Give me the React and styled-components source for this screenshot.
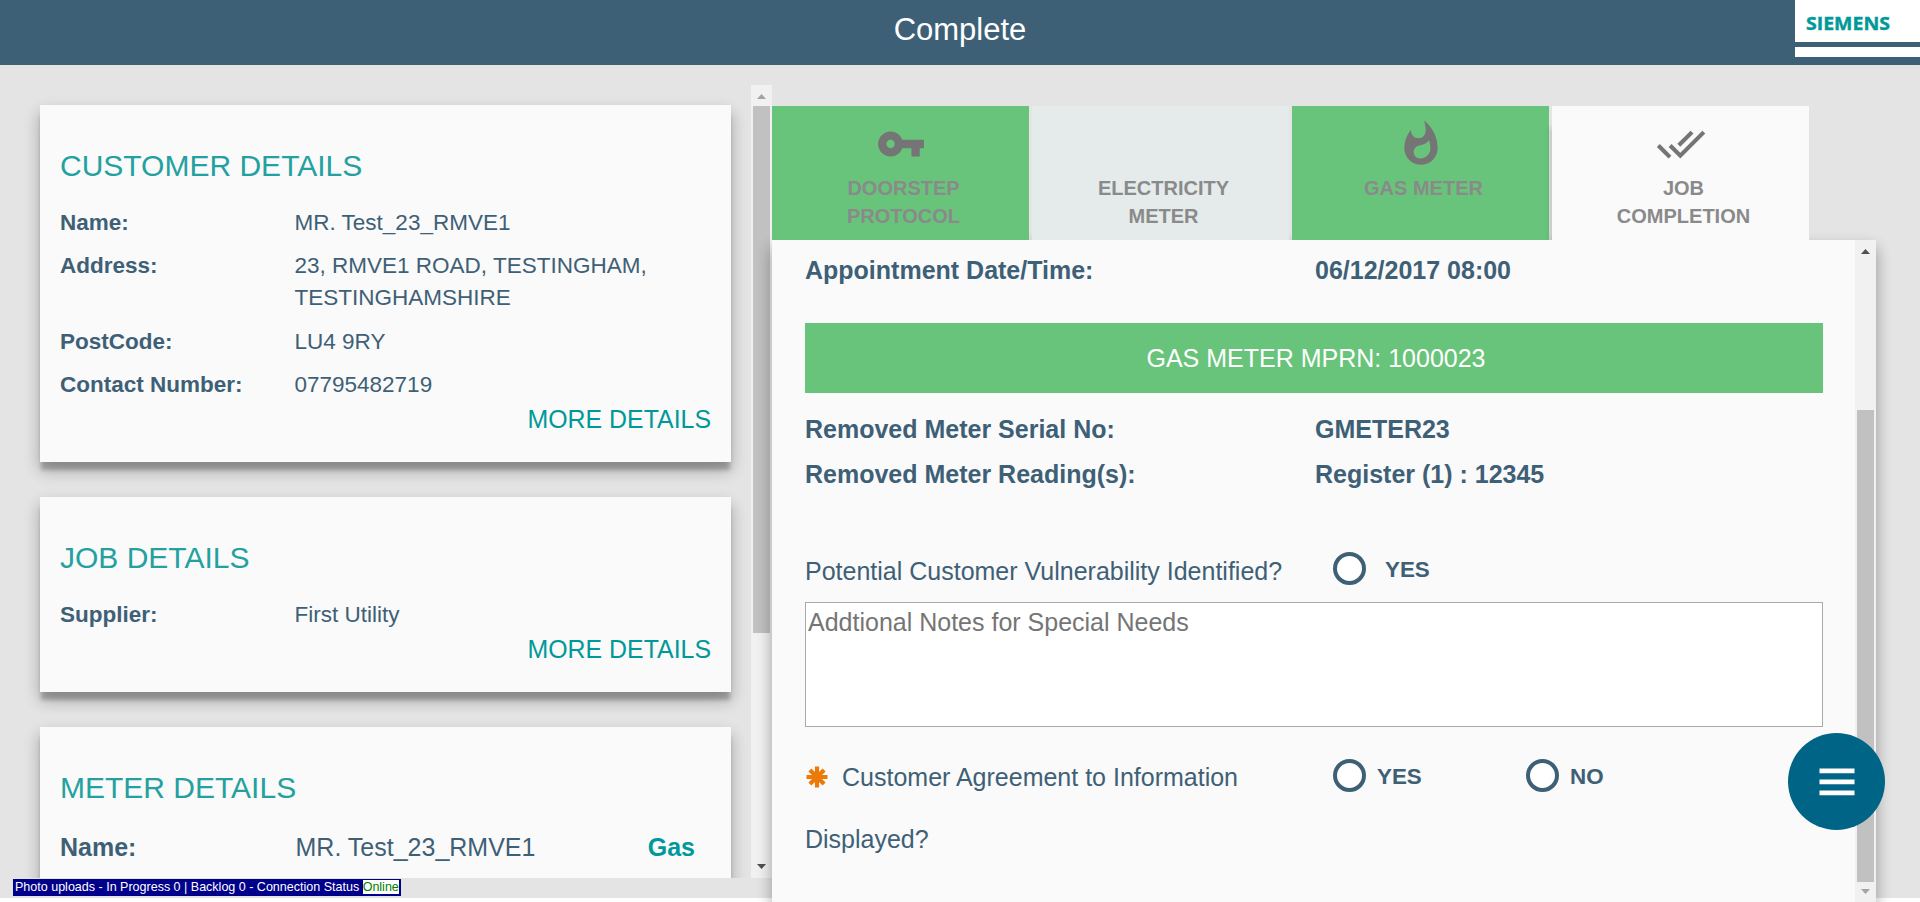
import React from "react";
import styled, { createGlobalStyle } from "styled-components";
import { MdVpnKey, MdWhatshot, MdDoneAll } from "react-icons/md";

const GlobalStyle = createGlobalStyle`
  *, *::before, *::after { box-sizing: border-box; }
  body {
    margin: 0;
    background: #fff;
    color: #3e6077;
    font-family: "Liberation Sans", Arial, sans-serif;
  }
`;

const Page = styled.div`
  display: flex;
  flex-direction: column;
  height: 902px;
  overflow: hidden;
  background: linear-gradient(#e4e4e4 898px, #fff 898px);
`;

const Header = styled.header`
  flex: none;
  display: grid;
  grid-template-columns: 1fr auto 1fr;
  height: 65px;
  background: #3e6077;
`;

const Title = styled.h1`
  grid-column: 2;
  margin: 0;
  color: #fff;
  font-size: 31px;
  font-weight: 400;
  line-height: 59px;
`;

const Brand = styled.div`
  justify-self: end;
  display: flex;
  flex-direction: column;
  gap: 5px;
  width: 125px;
  height: 57px;
`;

const BrandName = styled.div`
  height: 42px;
  background: #fff;

  svg { display: block; }
  text {
    fill: #009999;
    stroke: #009999;
    stroke-width: 0.4px;
    font-family: "Open Sans", "Noto Sans", sans-serif;
    font-size: 18.5px;
    font-weight: 700;
  }
`;

const BrandStripe = styled.div`
  flex: 1;
  background: #fff;
`;

const Content = styled.div`
  flex: 1;
  display: flex;
  min-height: 0;
`;

const Sidebar = styled.div`
  width: 772px;
  padding-top: 20px;
`;

const SideScroller = styled.div`
  display: flex;
  height: 793px;
`;

const Cards = styled.div`
  flex: 1;
  display: flex;
  flex-direction: column;
  gap: 35px;
  padding: 20px 20px 0 40px;
  overflow: hidden;
`;

const Card = styled.section`
  flex: none;
  height: ${(p) => p.$height}px;
  padding: 44px 20px 0 20px;
  background: #fafafa;
  box-shadow:
    0 9px 4px -1px rgba(0, 0, 0, 0.22),
    0 8px 14px 0 rgba(0, 0, 0, 0.17),
    0 8px 18px 0 rgba(0, 0, 0, 0.12);
`;

const CardTitle = styled.h2`
  margin: 0 0 24px;
  color: #23a1a1;
  font-size: 30px;
  font-weight: 400;
  line-height: 34px;
`;

const DetailRow = styled.div`
  display: grid;
  grid-template-columns: ${(p) => (p.$large ? 235.5 : 234.5)}px 1fr auto;
  margin-bottom: ${(p) => (p.$last ? 0 : 11.3)}px;
  font-size: ${(p) => (p.$large ? 25 : 22.5)}px;
  line-height: ${(p) => (p.$large ? 36 : 32)}px;
`;

const Label = styled.span`
  font-weight: 700;
`;

const Fuel = styled.span`
  padding-right: 16px;
  color: #009999;
  font-weight: 700;
`;

const MoreLink = styled.a`
  display: block;
  color: #009999;
  font-size: 24.9px;
  line-height: 36px;
  text-align: right;
`;

const Status = styled.div`
  width: fit-content;
  height: 17px;
  margin: 1px 0 0 13px;
  padding: 1px 2px;
  background: #00008b;
  color: #fff;
  font-size: 12.53px;
  line-height: 14px;
  white-space: pre;

  b {
    display: inline-block;
    height: 14px;
    background: #fff;
    color: #008000;
    font-weight: 400;
  }
`;

const Track = styled.div`
  flex: none;
  display: flex;
  flex-direction: column;
  align-items: center;
  width: 21px;
  background: #f1f1f1;
`;

const ArrowBox = styled.div`
  display: grid;
  place-items: center;
  height: 21px;
  padding: ${(p) => (p.$down ? "0 1px 3px 0" : "2px 1px 0 0")};
`;

const Thumb = styled.div`
  width: 17px;
  height: ${(p) => p.$height}px;
  margin: ${(p) => p.$offset || 0}px 0 auto;
  background: #c1c1c1;
`;

const Main = styled.main`
  display: flex;
  flex-direction: column;
  width: 1104px;
  padding-top: 41px;
`;

const Tabs = styled.nav`
  flex: none;
  display: flex;
  gap: 3px;
  height: 134px;
`;

const tones = { done: "#68c47a", idle: "#e4ebea", current: "#fafafa" };

const Tab = styled.div`
  display: flex;
  flex-direction: column;
  align-items: center;
  width: 257px;
  padding-top: 13px;
  background: ${(p) => tones[p.$tone]};
  box-shadow: ${(p) => (p.$tone === "current" ? "-1px 22px 6px rgba(0, 0, 0, 0.2)" : "none")};
  clip-path: inset(0 0 0 -10px);
`;

const TabIcon = styled.div`
  height: 54.5px;
  color: #757575;

  svg { display: block; width: 50px; height: 50px; }
`;

const TabLabel = styled.span`
  width: 150px;
  padding-left: 6px;
  box-sizing: content-box;
  color: #8a8a8a;
  font-size: 20px;
  font-weight: 700;
  line-height: 28px;
  text-align: center;
`;

const Panel = styled.div`
  flex: 1;
  display: flex;
  background: #fafafa;
  box-shadow: 0 8px 14px 0 rgba(0, 0, 0, 0.2), 0 8px 16px 0 rgba(0, 0, 0, 0.16);
`;

const Form = styled.div`
  flex: 1;
  padding: 13px 32px 0 33px;
  font-size: 25px;
`;

const Fact = styled.div`
  display: grid;
  grid-template-columns: 510px 1fr;
  height: 45px;
  font-weight: 700;
  line-height: 34px;
`;

const MeterBanner = styled.div`
  height: 70px;
  margin: 25px 0 19px;
  padding-left: 4px;
  background: #68c47a;
  color: #fff;
  line-height: 70px;
  text-align: center;
`;

const Question = styled.div`
  display: flex;
  height: ${(p) => p.$height}px;
`;

const Prompt = styled.div`
  width: 528px;
  padding: ${(p) => p.$top}px 60px 0 0;
  line-height: 62px;
  white-space: ${(p) => (p.$wrap ? "normal" : "nowrap")};

  svg { width: 24px; height: 24px; margin-right: 13px; vertical-align: -3px; }
`;

const Option = styled.label`
  display: flex;
  gap: ${(p) => p.$gap}px;
  width: 193px;
  height: 33px;
  margin-top: ${(p) => p.$top}px;
  font-size: 22.4px;
  font-weight: 700;
  line-height: 35px;
`;

const Radio = styled.span`
  width: 33px;
  height: 33px;
  border: 4px solid #3e6077;
  border-radius: 50%;
  background: #fff;
`;

const Notes = styled.textarea`
  display: block;
  width: 100%;
  height: 125px;
  margin: 0;
  padding: 4px 2px;
  border: 1px solid #a9a9a9;
  background: #fff;
  font: 25px/30px "Liberation Sans", Arial, sans-serif;
  resize: none;

  &::placeholder { color: #757575; }
`;

const MenuButton = styled.button`
  position: absolute;
  left: 1788px;
  top: 733px;
  width: 97px;
  height: 97px;
  padding: 0;
  border: 0;
  border-radius: 50%;
  background: #006487;

  svg { display: block; margin: 0 auto; }
`;

const Arrow = ({ down, faded }) => (
  <svg width="9" height="5" viewBox="0 0 9 5">
    <path d={down ? "M0 0h9l-4.5 5z" : "M0 5h9l-4.5-5z"} fill={faded ? "#a3a3a3" : "#505050"} />
  </svg>
);

const Scrollbar = ({ height, offset, atTop, atBottom }) => (
  <Track>
    <ArrowBox><Arrow faded={atTop} /></ArrowBox>
    <Thumb $height={height} $offset={offset} />
    <ArrowBox $down><Arrow down faded={atBottom} /></ArrowBox>
  </Track>
);

const Required = () => (
  <svg viewBox="0 0 24 24" stroke="#ec7a08" strokeWidth="4.2">
    <path d="M12 1.5v21M1.5 12h21M4.9 4.9l14.2 14.2M19.1 4.9L4.9 19.1" />
  </svg>
);

const Detail = ({ label, children, extra, ...rest }) => (
  <DetailRow {...rest}>
    <Label>{label}</Label>
    <span>{children}</span>
    {extra && <Fuel>{extra}</Fuel>}
  </DetailRow>
);

export default function App() {
  return (
    <Page>
      <GlobalStyle />
      <Header>
        <Title>Complete</Title>
        <Brand>
          <BrandName>
            <svg width="125" height="42">
              <text x="11" y="30" textLength="84" lengthAdjust="spacingAndGlyphs">SIEMENS</text>
            </svg>
          </BrandName>
          <BrandStripe />
        </Brand>
      </Header>
      <Content>
        <Sidebar>
          <SideScroller>
            <Cards>
              <Card $height={357}>
                <CardTitle>CUSTOMER DETAILS</CardTitle>
                <Detail label="Name:">MR. Test_23_RMVE1</Detail>
                <Detail label="Address:">23, RMVE1 ROAD, TESTINGHAM,<br />TESTINGHAMSHIRE</Detail>
                <Detail label="PostCode:">LU4 9RY</Detail>
                <Detail label="Contact Number:" $last>07795482719</Detail>
                <MoreLink>MORE DETAILS</MoreLink>
              </Card>
              <Card $height={195}>
                <CardTitle>JOB DETAILS</CardTitle>
                <Detail label="Supplier:" $last>First Utility</Detail>
                <MoreLink>MORE DETAILS</MoreLink>
              </Card>
              <Card $height={195}>
                <CardTitle>METER DETAILS</CardTitle>
                <Detail label="Name:" extra="Gas" $large>MR. Test_23_RMVE1</Detail>
              </Card>
            </Cards>
            <Scrollbar height={527} atTop />
          </SideScroller>
          <Status>Photo uploads - In Progress 0 | Backlog 0 - Connection Status <b>Online</b></Status>
        </Sidebar>
        <Main>
          <Tabs>
            <Tab $tone="done">
              <TabIcon><MdVpnKey /></TabIcon>
              <TabLabel>DOORSTEP PROTOCOL</TabLabel>
            </Tab>
            <Tab $tone="idle">
              <TabIcon />
              <TabLabel>ELECTRICITY METER</TabLabel>
            </Tab>
            <Tab $tone="done">
              <TabIcon><MdWhatshot /></TabIcon>
              <TabLabel>GAS METER</TabLabel>
            </Tab>
            <Tab $tone="current">
              <TabIcon><MdDoneAll /></TabIcon>
              <TabLabel>JOB COMPLETION</TabLabel>
            </Tab>
          </Tabs>
          <Panel>
            <Form>
              <Fact><span>Appointment Date/Time:</span><span>06/12/2017 08:00</span></Fact>
              <MeterBanner>GAS METER MPRN: 1000023</MeterBanner>
              <Fact><span>Removed Meter Serial No:</span><span>GMETER23</span></Fact>
              <Fact><span>Removed Meter Reading(s):</span><span>Register (1) : 12345</span></Fact>
              <Question $height={100}>
                <Prompt $top={38}>Potential Customer Vulnerability Identified?</Prompt>
                <Option $gap={19} $top={50}><Radio />YES</Option>
              </Question>
              <Notes placeholder="Addtional Notes for Special Needs" />
              <Question $height={150}>
                <Prompt $wrap $top={19}><Required />Customer Agreement to Information Displayed?</Prompt>
                <Option $gap={11} $top={32}><Radio />YES</Option>
                <Option $gap={11} $top={32}><Radio />NO</Option>
              </Question>
            </Form>
            <Scrollbar height={472} offset={149} atBottom />
          </Panel>
        </Main>
      </Content>
      <MenuButton aria-label="Menu">
        <svg width="36" height="28" viewBox="0 0 36 28" fill="#fff">
          <path d="M0.5 0.5h35v4.8h-35zM0.5 11.5h35v4.8h-35zM0.5 22.5h35v4.8h-35z" />
        </svg>
      </MenuButton>
    </Page>
  );
}
